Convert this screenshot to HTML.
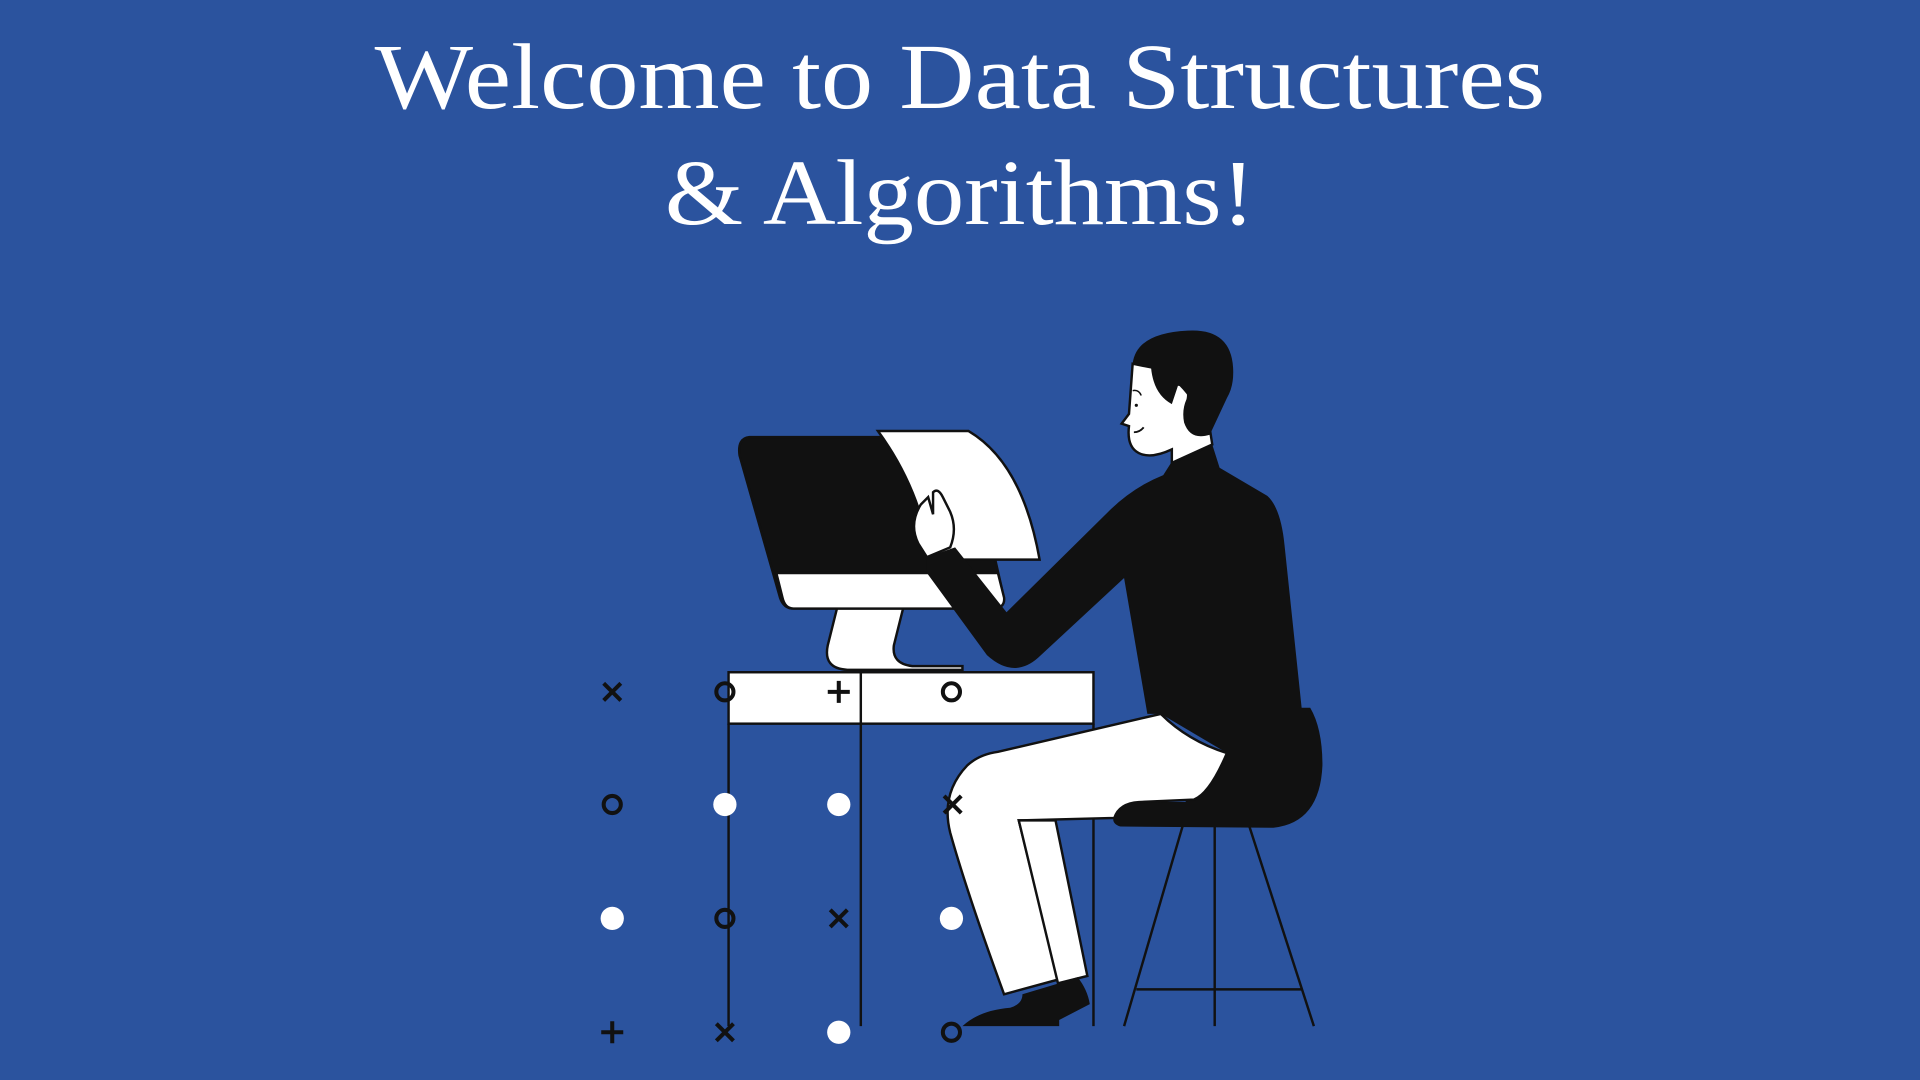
<!DOCTYPE html>
<html><head><meta charset="utf-8"><style>
html,body{margin:0;padding:0;background:#2B539E;}
svg{display:block}
</style></head><body>
<svg width="1920" height="1080" viewBox="0 0 1568 882" xmlns="http://www.w3.org/2000/svg">
<rect width="1568" height="882" fill="#2B539E"/>
<g font-family="'Liberation Serif', serif" fill="#fff" font-size="76" text-anchor="middle">
<text x="784" y="88" textLength="956" lengthAdjust="spacingAndGlyphs">Welcome to Data Structures</text>
<text x="784" y="183" textLength="482" lengthAdjust="spacingAndGlyphs">&amp; Algorithms!</text>
</g>
<g stroke="#111" stroke-width="2" fill="none">
<line x1="595" y1="591" x2="595" y2="838"/>
<line x1="703" y1="591" x2="703" y2="838"/>
<line x1="893" y1="591" x2="893" y2="838"/>
<line x1="966" y1="674" x2="918" y2="838"/>
<line x1="992" y1="674" x2="992" y2="838"/>
<line x1="1020" y1="674" x2="1073" y2="838"/>
<line x1="928" y1="808" x2="1063" y2="808"/>
</g>
<path d="M684 495 L676 527 Q672 546 692 547 L786 547 L786 544 L745 544 Q728 542 730 527 L738 495 Z" fill="#fff" stroke="#111" stroke-width="2"/>
<path d="M612 357 L790 357 L818 480 Q822 497 806 497 L648 497 Q640 497 637 488 L604 372 Q602 358 612 357 Z" fill="#111" stroke="#111" stroke-width="2"/>
<path d="M634 468 L815 468 L820 488 Q821 497 810 497 L648 497 Q641 497 639 488 Z" fill="#fff" stroke="#111" stroke-width="2"/>
<rect x="595" y="549" width="298" height="42" fill="#fff" stroke="#111" stroke-width="2"/>
<line x1="703" y1="549" x2="703" y2="591" stroke="#111" stroke-width="2"/>
<path d="M717 352 L791 352 Q835 378 849 457 L760 457 Q752 400 717 352 Z" fill="#fff" stroke="#111" stroke-width="2"/>
<path d="M950 388 L957 377 L990 363 L996 382 L1035 405 Q1046 415 1049 445 L1063 578 L1070 578 Q1080 595 1080 625 Q1078 672 1040 676 L915 675 Q905 672 912 662 Q918 655 930 655 L968 655 L1002 615 L948 583 L937 583 L918 472 L848 537 Q828 555 806 535 L757 468 L757 455 L780 447 L822 500 L905 418 Q925 398 950 388 Z" fill="#111"/>
<path d="M757 455 L750 444 Q742 428 752 412 L758 406 L762 420 L762 402 Q766 398 770 406 L776 418 Q782 432 776 447 Z" fill="#fff" stroke="#111" stroke-width="2"/>
<path d="M948 583 Q970 605 1002 615 Q988 648 975 653 L930 655 Q914 656 910 668 L832 670 L864 800 L820 812 Q790 730 776 680 Q768 648 790 625 Q800 616 815 614 Z" fill="#fff" stroke="#111" stroke-width="2"/>
<path d="M832 670 L862 670 L888 797 L864 803 Z" fill="#fff" stroke="#111" stroke-width="2"/>
<path d="M786 838 Q800 825 825 823 Q835 820 835 812 L865 803 L880 798 Q888 808 890 820 L865 833 L865 838 Z" fill="#111"/>
<path d="M925 297 L922 338 L916 346 L922 348 Q920 365 930 370 Q940 375 957 367 L957 378 L990 363 L988 350 Q965 305 940 300 Z" fill="#fff" stroke="#111" stroke-width="2"/>
<path d="M925 297 Q928 272 970 270 Q1005 268 1007 300 Q1008 315 1002 325 L988 355 Q972 360 967 345 Q965 335 969 326 Q971 316 962 315 L957 330 Q942 322 940 300 Z" fill="#111"/>
<circle cx="928" cy="331" r="1.3" fill="#111"/>
<path d="M925 319 Q930 318 932 323" stroke="#111" stroke-width="1.2" fill="none"/>
<path d="M926 353 Q931 353 934 349" stroke="#111" stroke-width="1.5" fill="none"/>
<g stroke="#111" stroke-width="3.3" fill="none">
<path d="M493 558 L507 572 M507 558 L493 572"/>
<circle cx="592" cy="565" r="7"/>
<path d="M685 556 L685 574 M676 565 L694 565"/>
<circle cx="777" cy="565" r="7"/>
<circle cx="500" cy="657" r="7"/>
<path d="M771 650 L785 664 M785 650 L771 664"/>
<circle cx="592" cy="750" r="7"/>
<path d="M678 743 L692 757 M692 743 L678 757"/>
<path d="M500 834 L500 852 M491 843 L509 843"/>
<path d="M585 836 L599 850 M599 836 L585 850"/>
<circle cx="777" cy="843" r="7"/>
</g>
<g fill="#fff">
<circle cx="592" cy="657" r="9.5"/>
<circle cx="685" cy="657" r="9.5"/>
<circle cx="500" cy="750" r="9.5"/>
<circle cx="777" cy="750" r="9.5"/>
<circle cx="685" cy="843" r="9.5"/>
</g>
</svg>
</body></html>
